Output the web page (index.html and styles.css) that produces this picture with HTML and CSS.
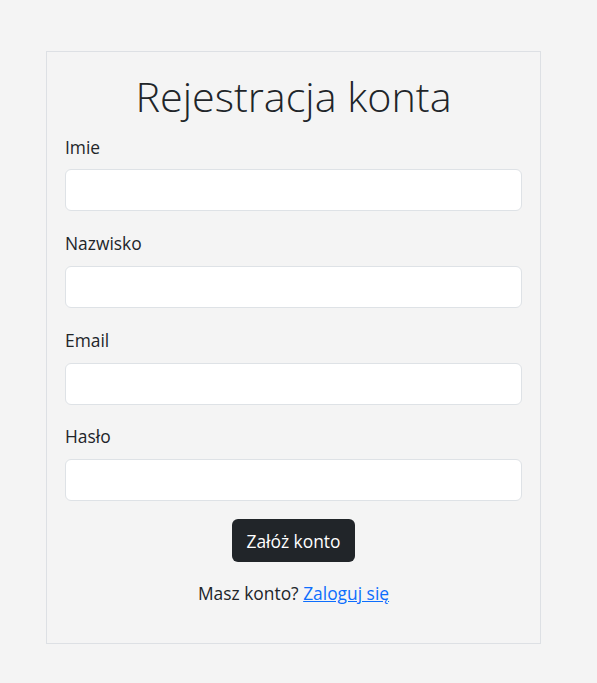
FILE: index.html
```html
<!DOCTYPE html>
<html lang="pl">
<head>
<meta charset="utf-8">
<title>Rejestracja konta</title>
<link rel="stylesheet" href="styles.css">
</head>
<body>
<main class="card">
  <h1 class="title">Rejestracja konta</h1>
  <form class="form">
    <div class="group">
      <label class="label" for="imie">Imie</label>
      <input class="input" id="imie" type="text">
    </div>
    <div class="group">
      <label class="label" for="nazwisko">Nazwisko</label>
      <input class="input" id="nazwisko" type="text">
    </div>
    <div class="group">
      <label class="label" for="email">Email</label>
      <input class="input" id="email" type="email">
    </div>
    <div class="group">
      <label class="label" for="haslo">Hasło</label>
      <input class="input" id="haslo" type="password">
    </div>
    <div class="actions">
      <button class="btn" type="button">Załóż konto</button>
    </div>
    <p class="login">Masz konto? <a class="link" href="#">Zaloguj się</a></p>
  </form>
</main>
</body>
</html>
```
FILE: styles.css
```css
html, body {
  margin: 0;
  padding: 0;
}
body {
  background: #f4f4f4;
  color: #212529;
  font-family: "Open Sans", "Noto Sans", sans-serif;
  font-size: 17.4px;
  line-height: 26.4px;
  padding-top: 51px;
}
.card {
  box-sizing: border-box;
  width: 495px;
  margin-left: 46px;
  border: 1px solid #dde0e4;
  background: #f4f4f4;
  padding: 20px 18px 37px;
}
.title {
  margin: 0 0 12px;
  text-align: center;
  font-weight: 300;
  font-size: 41.3px;
  line-height: 49.6px;
}
.form {
  display: flex;
  flex-direction: column;
}
.group {
  display: flex;
  flex-direction: column;
  margin-bottom: 18.8px;
}
.label {
  margin-bottom: 9.4px;
}
.input {
  box-sizing: border-box;
  height: 42px;
  width: 100%;
  border: 1px solid #dee2e6;
  border-radius: 6px;
  background: #fff;
  font: inherit;
  padding: 6px 12px;
}
.actions {
  display: flex;
  justify-content: center;
  margin-top: -0.6px;
}
.btn {
  font: inherit;
  background: #212529;
  color: #fff;
  border: 0;
  border-radius: 6px;
  height: 43px;
  padding: 0 14px;
}
.login {
  text-align: center;
  margin: 17.2px 0 0;
}
.link {
  color: #0d6efd;
}
```
